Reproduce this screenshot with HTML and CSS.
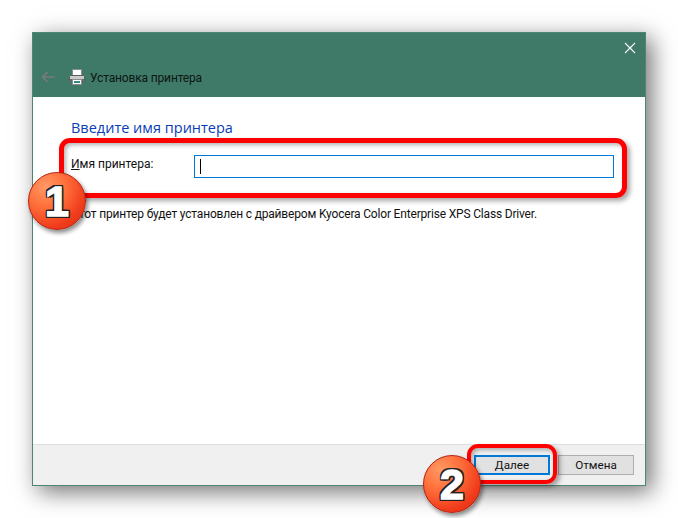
FILE: index.html
```html
<!DOCTYPE html>
<html lang="en">
<head>
    <meta charset="UTF-8">
    <title>Установка принтера</title>
    <link rel="stylesheet" href="styles.css">
</head>
<body>
    <div class="window">
        <div class="titlebar">
            <div class="close-row">
                <svg class="close" width="12" height="12" viewBox="0 0 12 12"><path d="M1 1L11 11M11 1L1 11" stroke="#fff" stroke-width="1.1" fill="none"/></svg>
            </div>
            <div class="nav-row">
                <svg class="back" width="14" height="12" viewBox="0 0 14 12"><path d="M13.5 6H1.5M6.5 1L1.5 6L6.5 11" stroke="#7a7a7c" stroke-width="1.7" fill="none"/></svg>
                <svg class="printer" width="16" height="16" viewBox="0 0 16 16">
                    <rect x="3.5" y="0.5" width="9" height="6" fill="#fff" stroke="#8c8c8c"/>
                    <rect x="0.5" y="6.5" width="15" height="6" rx="1" fill="#c9c9c9" stroke="#5c5c5c"/>
                    <rect x="1" y="10" width="14" height="2" fill="#6a6a6a"/>
                    <rect x="3.5" y="10.5" width="9" height="5" fill="#fff" stroke="#8c8c8c"/>
                    <rect x="5" y="12" width="6" height="2" fill="#2f7fa8"/>
                    <rect x="7" y="12" width="2" height="2" fill="#3c9a4e"/>
                </svg>
                <span class="wintitle">Установка принтера</span>
            </div>
        </div>

        <div class="content">
            <h1>Введите имя принтера</h1>
            <div class="field">
                <label for="printerName"><u>И</u>мя принтера:</label>
                <div class="input" id="printerName"><span class="caret"></span></div>
            </div>
            <p class="info">Этот принтер будет установлен с драйвером Kyocera Color Enterprise XPS Class Driver.</p>
        </div>

        <div class="footer">
            <button class="btn btn-default"><u>Д</u>алее</button>
            <button class="btn">Отмена</button>
        </div>

        <div class="frame frame-name"></div>
        <div class="frame frame-next"></div>
        <div class="badge badge-one"><span>1</span></div>
        <div class="badge badge-two"><span>2</span></div>
    </div>
</body>
</html>
```

FILE: styles.css
```css
body {
    font-family: Roboto, 'Open Sans', sans-serif;
    background-color: #fff;
    color: #000;
    margin: 0;
    padding: 32px 0 0 32px;
    height: 486px;
    overflow: hidden;
}
.window {
    position: relative;
    width: 614px;
    height: 454px;
    box-sizing: border-box;
    border: 1px solid #4f8573;
    background: #fff;
    display: flex;
    flex-direction: column;
    box-shadow: 6px 6px 22px rgba(0, 0, 0, 0.55);
}
.titlebar {
    background-color: #3f7a68;
    height: 64px;
    flex-shrink: 0;
}
.close-row {
    display: flex;
    justify-content: flex-end;
    padding: 9px 9px 0 0;
    height: 20px;
}
.nav-row {
    display: flex;
    align-items: center;
    margin-top: 6px;
    padding-left: 8px;
    height: 18px;
}
.back {
    margin-right: 14px;
}
.printer {
    margin-right: 5px;
}
.wintitle {
    font-size: 12px;
    letter-spacing: -0.15px;
    padding-top: 1px;
    color: #0c1512;
}
.content {
    flex: 1;
    padding: 21px 31px 0 38px;
}
h1 {
    font-family: 'Open Sans', sans-serif;
    font-size: 14.5px;
    font-weight: 400;
    line-height: 20px;
    color: #0a3db5;
    margin: 0 0 17px;
}
.field {
    display: flex;
    align-items: flex-start;
}
label {
    font-size: 12px;
    line-height: 18px;
    width: 123px;
    flex-shrink: 0;
    color: #111;
}
.input {
    flex: 1;
    height: 23px;
    box-sizing: border-box;
    border: 1px solid #0078d7;
    padding: 3px 5px;
}
.caret {
    display: block;
    width: 1px;
    height: 15px;
    background: #000;
}
.info {
    font-size: 12px;
    letter-spacing: -0.18px;
    line-height: 18px;
    margin: 27px 0 0;
    color: #111;
}
.footer {
    background-color: #f0f0f0;
    border-top: 1px solid #dfdfdf;
    height: 41px;
    flex-shrink: 0;
    display: flex;
    justify-content: flex-end;
    gap: 8px;
    padding: 10px 11px 0 0;
    box-sizing: border-box;
}
.btn {
    width: 76px;
    height: 20px;
    box-sizing: border-box;
    background: #e1e1e1;
    border: 1px solid #adadad;
    font-family: inherit;
    font-size: 11.7px;
    line-height: 16px;
    padding: 0;
    color: #111;
}
.btn-default {
    border: 2px solid #0078d7;
}
.frame {
    position: absolute;
    box-sizing: border-box;
    border: 5px solid #ff0000;
    border-radius: 11px;
    box-shadow: 3px 3px 5px rgba(0, 0, 0, 0.35), inset 2px 2px 4px rgba(0, 0, 0, 0.3);
}
.frame-name {
    left: 26px;
    top: 105px;
    width: 568px;
    height: 60px;
}
.frame-next {
    left: 434px;
    top: 411px;
    width: 90px;
    height: 40px;
    border-width: 4px;
}
.badge {
    position: absolute;
    width: 58px;
    height: 58px;
    box-sizing: border-box;
    border: 1px solid #b5230f;
    border-radius: 50%;
    background: radial-gradient(circle at 30% 25%, #ff9a66 0%, #ff6f3a 35%, #f03c1c 70%, #d42c12 100%);
    box-shadow: 2px 3px 4px rgba(0, 0, 0, 0.45);
    display: flex;
    align-items: center;
    justify-content: center;
}
.badge span {
    font-family: 'Liberation Sans', sans-serif;
    font-weight: 700;
    font-size: 43px;
    line-height: 1;
    color: #fff;
    -webkit-text-stroke: 1.5px #fff;
    text-shadow: 2px 0 0 #222, -2px 0 0 #222, 0 2px 0 #222, 0 -2px 0 #222, 2px 2px 0 #222, -2px 2px 0 #222, 2px -2px 0 #222, -2px -2px 0 #222;
}
.badge-one {
    left: -5px;
    top: 139px;
}
.badge-two {
    left: 390px;
    top: 422px;
}
```
